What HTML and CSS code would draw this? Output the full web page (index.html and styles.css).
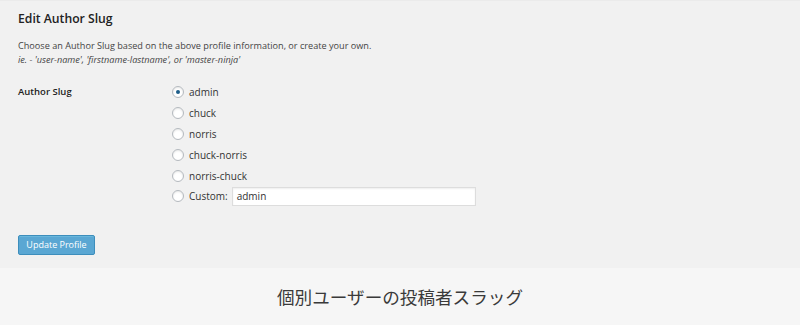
FILE: index.html
```html
<!DOCTYPE html>
<html lang="ja">
<head>
  <meta charset="UTF-8">
  <title>Edit Author Slug</title>
  <link rel="stylesheet" href="styles.css">
</head>
<body>
  <div class="panel">
    <h3>Edit Author Slug</h3>
    <p class="desc">Choose an Author Slug based on the above profile information, or create your own.<br>
      <em>ie. - 'user-name', 'firstname-lastname', or 'master-ninja'</em></p>

    <div class="field">
      <div class="field-label">Author Slug</div>
      <div class="choices">
        <label class="choice"><span class="radio checked"></span>admin</label>
        <label class="choice"><span class="radio"></span>chuck</label>
        <label class="choice"><span class="radio"></span>norris</label>
        <label class="choice"><span class="radio"></span>chuck-norris</label>
        <label class="choice"><span class="radio"></span>norris-chuck</label>
        <label class="choice"><span class="radio"></span>Custom:<span class="custom-input">admin</span></label>
      </div>
    </div>

    <button class="btn-primary" type="button">Update Profile</button>
  </div>

  <div class="caption">個別ユーザーの投稿者スラッグ</div>
</body>
</html>
```

FILE: styles.css
```css
body {
  margin: 0;
  padding: 0;
  font-family: 'Open Sans', 'Noto Sans', sans-serif;
  color: #444;
}

.panel {
  background: #f1f1f1;
  height: 268px;
  box-sizing: border-box;
  padding: 9px 18px 0;
  border-top: 1px solid #ebebeb;
}

.panel h3 {
  margin: 0;
  font-size: 12.2px;
  font-weight: 600;
  color: #222;
  line-height: 18px;
}

.desc {
  margin: 11px 0 0;
  font-size: 9.15px;
  line-height: 14px;
  color: #444;
}

.field {
  display: flex;
  margin-top: 15px;
}

.field-label {
  width: 154px;
  font-size: 9.5px;
  font-weight: 600;
  color: #222;
  line-height: 20px;
}

.choices {
  display: flex;
  flex-direction: column;
}

.choice {
  display: flex;
  align-items: center;
  height: 20.8px;
  font-size: 10px;
  color: #333;
}

.radio {
  width: 10px;
  height: 10px;
  border: 1px solid #b4b9be;
  border-radius: 50%;
  background: #fff;
  box-shadow: inset 0 1px 2px rgba(0,0,0,0.1);
  margin-right: 5px;
  position: relative;
}

.radio.checked::after {
  content: "";
  position: absolute;
  left: 3px;
  top: 3px;
  width: 4px;
  height: 4px;
  border-radius: 50%;
  background: #1e5e8a;
}

.custom-input {
  display: inline-block;
  margin-left: 4px;
  width: 234px;
  height: 17px;
  line-height: 17px;
  padding: 0 4px;
  background: #fff;
  border: 1px solid #ddd;
  box-shadow: inset 0 1px 2px rgba(0,0,0,0.07);
  font-size: 10px;
  color: #333;
}

.btn-primary {
  display: block;
  margin-top: 28px;
  width: 77px;
  height: 20px;
  padding: 0;
  background: #5aa7d3;
  border: 1px solid #3d8ebc;
  border-radius: 2px;
  color: #fff;
  font-family: 'Open Sans', sans-serif;
  font-size: 9px;
  box-shadow: inset 0 1px 0 rgba(120,200,230,0.5);
}

.caption {
  background: #f6f6f6;
  height: 57px;
  display: flex;
  align-items: center;
  justify-content: center;
  font-family: 'Noto Sans CJK JP', sans-serif;
  font-size: 17.6px;
  color: #3a3a3a;
}
```
